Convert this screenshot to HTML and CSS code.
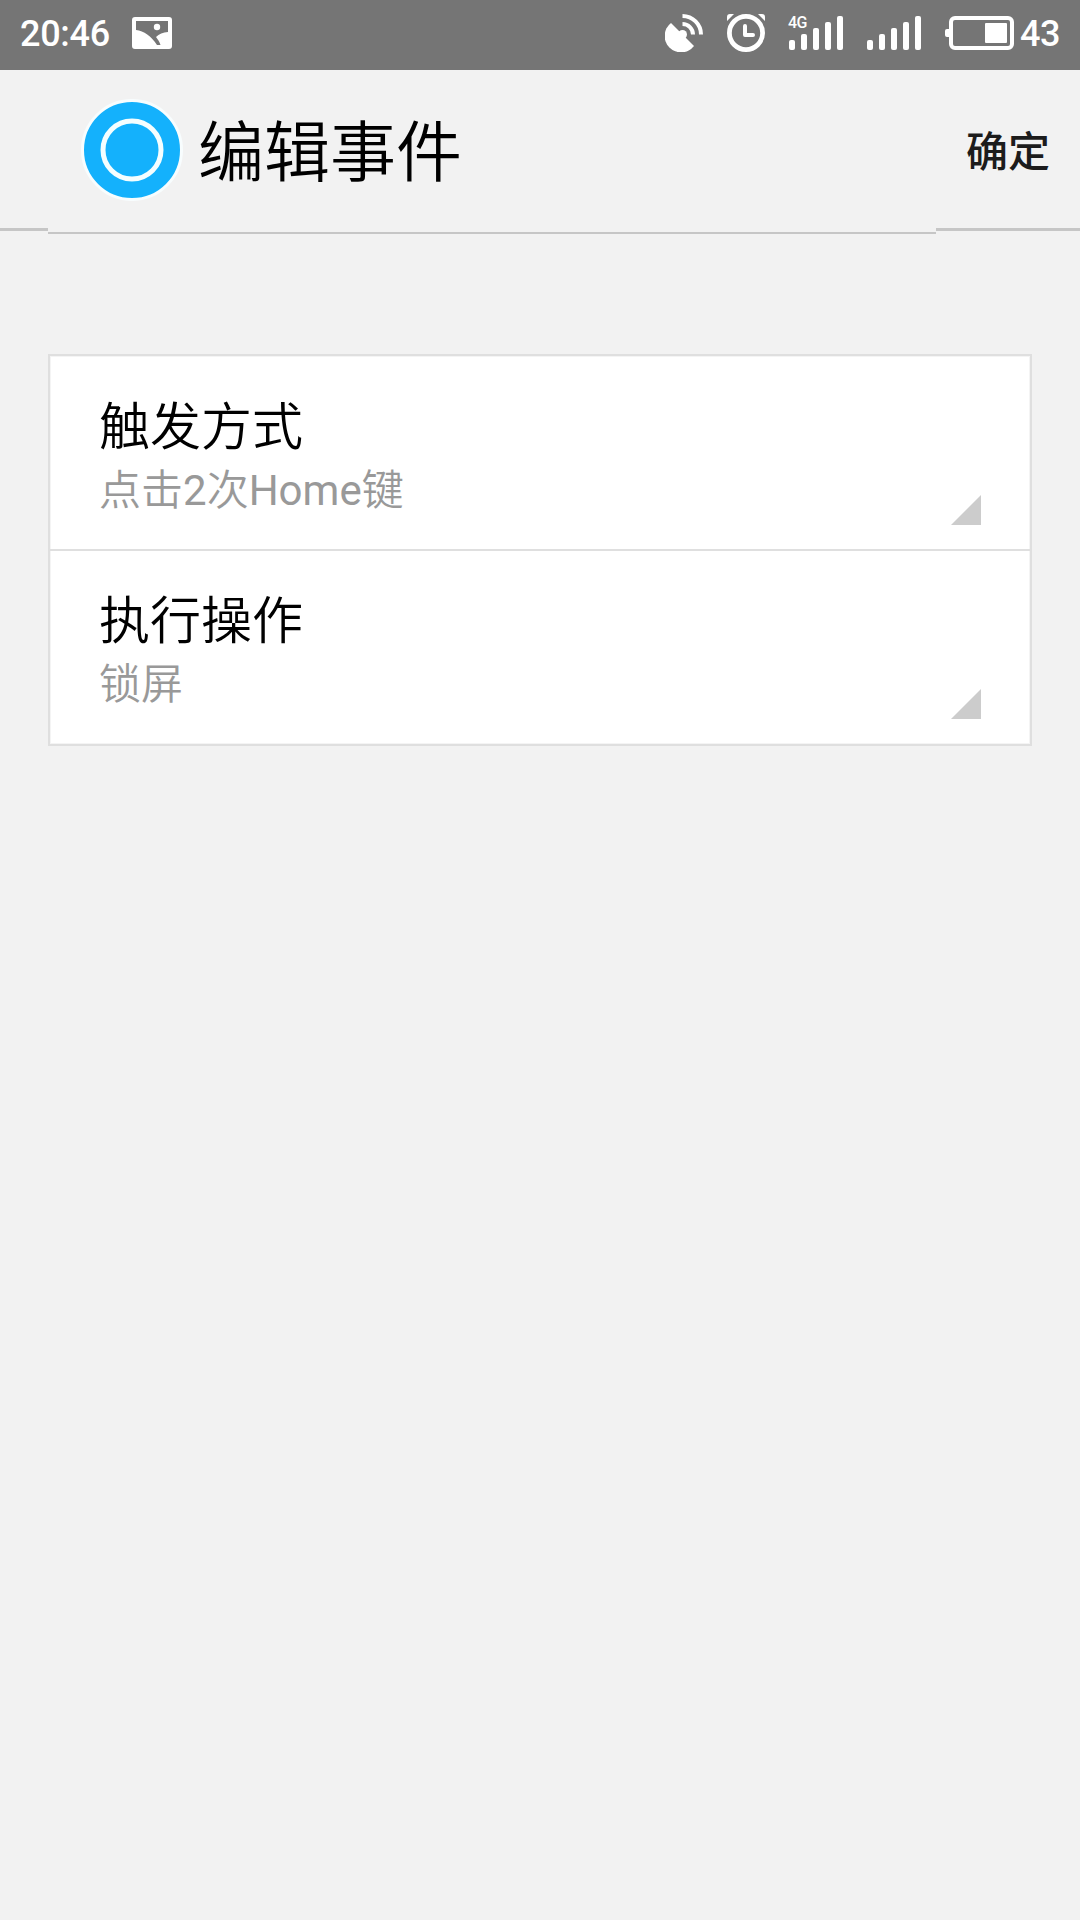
FILE: index.html
```html
<!DOCTYPE html>
<html lang="zh-CN">
<head>
  <meta charset="UTF-8">
  <meta name="viewport" content="width=device-width, initial-scale=1.0">
  <title>编辑事件</title>
  <link rel="stylesheet" href="styles.css">
</head>
<body>
<div class="statusbar">
  <span class="time">20:46</span>
  <svg class="picture" width="40" height="32" viewBox="0 0 40 32">
    <path fill="#fff" fill-rule="evenodd" d="M3 0H37Q40 0 40 3V29Q40 32 37 32H3Q0 32 0 29V3Q0 0 3 0ZM4 4V13C12 14 19 19 25 28H28.500C27.500 25 26 22.500 24 20C27 17 31 15.500 36 15V4Z"/>
    <circle cx="25" cy="10" r="3.200" fill="#fff"/>
  </svg>

  <div class="status-right">
    <svg width="38" height="38" viewBox="0 0 38 38">
      <path fill="#fff" d="M6 9L17.500 20.500L29 32A16.400 16.400 0 1 1 6 9Z"/>
      <circle cx="17.500" cy="20.500" r="4.500" fill="#fff"/>
      <path fill="none" stroke="#fff" stroke-width="4" d="M17.500 10A10.500 10.500 0 0 1 28 20.500M17.500 2A18.500 18.500 0 0 1 36 20.500"/>
    </svg>
    <svg class="alarm" width="38" height="38" viewBox="0 0 38 38">
      <circle cx="19" cy="19" r="16.600" fill="none" stroke="#fff" stroke-width="4.800"/>
      <path fill="none" stroke="#fff" stroke-width="4" stroke-linecap="round" stroke-linejoin="round" d="M18 12V21H26"/>
      <path fill="#fff" d="M0 7V3Q0 0 3 0H7ZM38 7V3Q38 0 35 0H31Z"/>
    </svg>
    <div class="signal">
      <span class="network">4G</span>
      <i class="bar b1"></i><i class="bar b2"></i><i class="bar b3"></i><i class="bar b4"></i><i class="bar b5"></i>
    </div>
    <div class="signal">
      <i class="bar b1"></i><i class="bar b2"></i><i class="bar b3"></i><i class="bar b4"></i><i class="bar b5"></i>
    </div>
    <svg class="battery" width="69" height="34" viewBox="0 0 69 34">
      <rect x="6" y="2" width="61" height="30" rx="4" fill="none" stroke="#fff" stroke-width="4"/>
      <path fill="#fff" d="M4 13H2Q0 13 0 15V19Q0 21 2 21H4Z"/>
      <rect x="40" y="7" width="22" height="20" rx="1" fill="#fff"/>
    </svg>
    <span class="percent">43</span>
  </div>
</div>

<header class="header">
  <div class="edge"></div>
  <div class="heading">
    <svg class="logo" width="102" height="102" viewBox="0 0 102 102">
      <circle cx="51" cy="51" r="49.500" fill="#14b1fc" stroke="#f8fdfe" stroke-width="3"/>
      <circle cx="51" cy="51" r="29" fill="none" stroke="#f5feff" stroke-width="5"/>
    </svg>
    <h1>编辑事件</h1>
  </div>
  <div class="edge action">确定</div>
</header>

<div class="card">
  <div class="item">
    <div class="text">
      <div class="title">触发方式</div>
      <div class="summary">点击<span class="latin">2</span>次<span class="latin">Home</span>键</div>
    </div>
    <div class="corner"></div>
  </div>
  <div class="item">
    <div class="text">
      <div class="title">执行操作</div>
      <div class="summary">锁屏</div>
    </div>
    <div class="corner"></div>
  </div>
</div>
</body>
</html>
```
FILE: styles.css
```css
* {
  box-sizing: border-box;
}

body {
  margin: 0;
  height: 1920px;
  background-color: #f2f2f2;
  font-family: Roboto, "Noto Sans CJK SC", sans-serif;
  color: #000;
  overflow: hidden;
}

svg {
  display: block;
  flex: none;
}

.statusbar {
  display: flex;
  align-items: center;
  height: 70px;
  padding: 0 20px;
  padding-bottom: 4px;
  background-color: #757575;
  color: #fff;
  font-size: 36px;
  font-weight: 500;
  line-height: 40px;
}

.time {
  width: 90px;
  padding-top: 1px;
  letter-spacing: -0.3px;
}

.picture {
  margin-left: 22px;
}

.status-right {
  display: flex;
  align-items: center;
  margin-left: auto;
}

.alarm {
  margin-left: 24px;
}

.signal {
  position: relative;
  display: flex;
  align-items: flex-end;
  gap: 6px;
  height: 34px;
  margin-left: 24px;
}

.network {
  position: absolute;
  left: -1px;
  top: -1px;
  font-size: 16px;
  line-height: 15px;
  letter-spacing: -0.5px;
}

.bar {
  width: 6px;
  border-radius: 2px;
  background-color: #fff;
}

.b1 { height: 10px; }
.b2 { height: 16px; }
.b3 { height: 22px; }
.b4 { height: 28px; }
.b5 { height: 34px; }

.battery {
  margin-left: 24px;
}

.percent {
  width: 40px;
  margin-left: 6px;
  padding-top: 1px;
  letter-spacing: -0.5px;
}

.header {
  display: grid;
  grid-template-columns: 48px 888px 144px;
  align-items: start;
}

.edge {
  height: 161px;
  border-bottom: 3px solid #c6c6c6;
}

.heading {
  display: flex;
  align-items: center;
  height: 164px;
  padding: 0 0 2px 33px;
  border-bottom: 2px solid #c6c6c6;
}

h1 {
  margin: 0 0 0 15px;
  padding-top: 8px;
  font-size: 66px;
  font-weight: 350;
  line-height: 96px;
}

.action {
  padding: 52px 0 0 30px;
  font-size: 42px;
  font-weight: 500;
  line-height: 62px;
  color: #1c1c1c;
}

.card {
  margin: 120px 48px 0;
  border: 2px solid #dfdfdf;
  background-color: #fff;
  box-shadow: inset 0 0 0 1px #f4f4f4;
}

.item {
  display: flex;
  justify-content: space-between;
  align-items: flex-end;
  height: 193px;
  padding: 0 49px 24px 49px;
}

.item + .item {
  height: 195px;
  padding-bottom: 25px;
  border-top: 2px solid #dfdfdf;
}

.text {
  align-self: flex-start;
  padding-top: 37px;
}

.item + .item .text {
  padding-top: 36px;
}

.title {
  font-size: 51px;
  font-weight: 350;
  line-height: 70px;
}

.summary {
  margin-top: -2px;
  font-size: 42px;
  font-weight: 350;
  line-height: 60px;
  color: #999;
}

.latin {
  font-weight: 400;
}

.corner {
  width: 30px;
  height: 30px;
  background-color: #ccc;
  clip-path: polygon(100% 0, 100% 100%, 0 100%);
}
```
